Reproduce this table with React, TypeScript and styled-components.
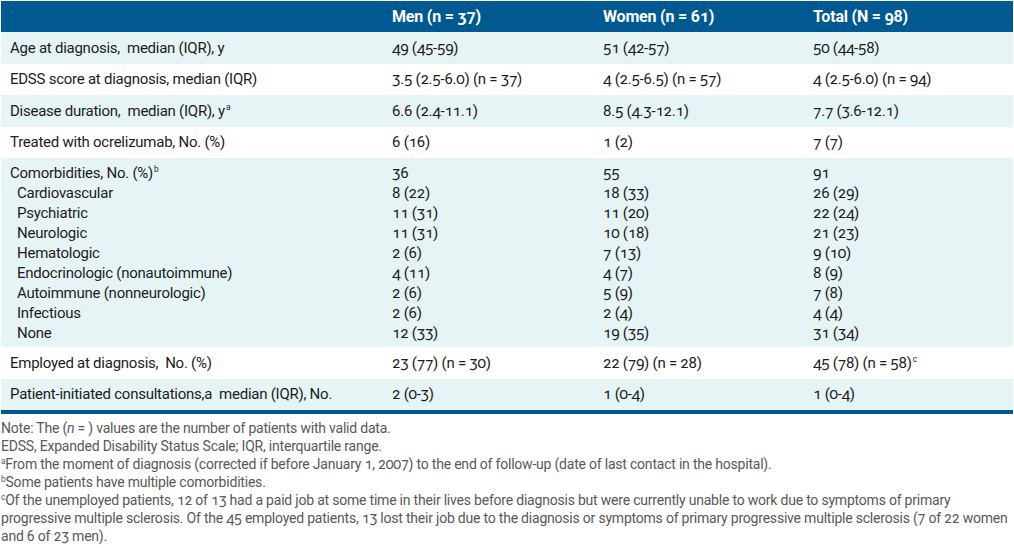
import styled, { createGlobalStyle } from 'styled-components';

type Row = {
  label: React.ReactNode;
  men: React.ReactNode;
  women: React.ReactNode;
  total: React.ReactNode;
  shaded: boolean;
};

const Sup = styled.sup`
  font-size: 0.55em;
  line-height: 0;
  vertical-align: 0.7em;
  margin-left: 1px;
`;

const rows: Row[] = [
  { label: 'Age at diagnosis,  median (IQR), y', men: '49 (45-59)', women: '51 (42-57)', total: '50 (44-58)', shaded: true },
  { label: 'EDSS score at diagnosis, median (IQR)', men: '3.5 (2.5-6.0) (n = 37)', women: '4 (2.5-6.5) (n = 57)', total: '4 (2.5-6.0) (n = 94)', shaded: false },
  { label: <>Disease duration,  median (IQR), y<Sup>a</Sup></>, men: '6.6 (2.4-11.1)', women: '8.5 (4.3-12.1)', total: '7.7 (3.6-12.1)', shaded: true },
  { label: 'Treated with ocrelizumab, No. (%)', men: '6 (16)', women: '1 (2)', total: '7 (7)', shaded: false },
];

const comorbidities = [
  ['Cardiovascular', '8 (22)', '18 (33)', '26 (29)'],
  ['Psychiatric', '11 (31)', '11 (20)', '22 (24)'],
  ['Neurologic', '11 (31)', '10 (18)', '21 (23)'],
  ['Hematologic', '2 (6)', '7 (13)', '9 (10)'],
  ['Endocrinologic (nonautoimmune)', '4 (11)', '4 (7)', '8 (9)'],
  ['Autoimmune (nonneurologic)', '2 (6)', '5 (9)', '7 (8)'],
  ['Infectious', '2 (6)', '2 (4)', '4 (4)'],
  ['None', '12 (33)', '19 (35)', '31 (34)'],
];

const tailRows: Row[] = [
  { label: 'Employed at diagnosis,  No. (%)', men: '23 (77) (n = 30)', women: '22 (79) (n = 28)', total: <>45 (78) (n = 58)<Sup>c</Sup></>, shaded: false },
  { label: 'Patient-initiated consultations,a  median (IQR), No.', men: '2 (0-3)', women: '1 (0-4)', total: '1 (0-4)', shaded: true },
];

const App = () => {
  return (
    <>
      <GlobalStyle />
      <Page>
        <Table>
          <HeaderRow>
            <Cell />
            <HeadCell>Men (n = 37)</HeadCell>
            <HeadCell>Women (n = 61)</HeadCell>
            <HeadCell>Total (N = 98)</HeadCell>
          </HeaderRow>
          {rows.map((r, i) => (
            <BodyRow key={i} $shaded={r.shaded}>
              <Cell>{r.label}</Cell>
              <Cell>{r.men}</Cell>
              <Cell>{r.women}</Cell>
              <Cell>{r.total}</Cell>
            </BodyRow>
          ))}
          <GroupRow $shaded>
            <Cell>Comorbidities, No. (%)<Sup>b</Sup></Cell>
            <Cell>36</Cell>
            <Cell>55</Cell>
            <Cell>91</Cell>
            {comorbidities.map((c) => (
              <SubLine key={c[0]}>
                <SubLabel>{c[0]}</SubLabel>
                <Cell>{c[1]}</Cell>
                <Cell>{c[2]}</Cell>
                <Cell>{c[3]}</Cell>
              </SubLine>
            ))}
          </GroupRow>
          {tailRows.map((r, i) => (
            <BodyRow key={i} $shaded={r.shaded}>
              <Cell>{r.label}</Cell>
              <Cell>{r.men}</Cell>
              <Cell>{r.women}</Cell>
              <Cell>{r.total}</Cell>
            </BodyRow>
          ))}
        </Table>
        <Notes>
          <NoteLine>Note: The (<i>n</i> = ) values are the number of patients with valid data.</NoteLine>
          <NoteLine>EDSS, Expanded Disability Status Scale; IQR, interquartile range.</NoteLine>
          <NoteLine>
            <NoteMark>a</NoteMark>From the moment of diagnosis (corrected if before January 1, 2007) to the end of follow-up (date of last contact in the hospital).
          </NoteLine>
          <NoteLine>
            <NoteMark>b</NoteMark>Some patients have multiple comorbidities.
          </NoteLine>
          <NoteLine>
            <NoteMark>c</NoteMark>Of the unemployed patients, 12 of 13 had a paid job at some time in their lives before diagnosis but were currently unable to work due to symptoms of primary
            <br />
            progressive multiple sclerosis. Of the 45 employed patients, 13 lost their job due to the diagnosis or symptoms of primary progressive multiple sclerosis (7 of 22 women
            <br />
            and 6 of 23 men).
          </NoteLine>
        </Notes>
      </Page>
    </>
  );
};

const GlobalStyle = createGlobalStyle`
  html, body {
    margin: 0;
    padding: 0;
    background: #ffffff;
  }
`;

const Page = styled.div`
  width: 1012px;
  padding: 1px 0 0 1px;
  font-family: Roboto, 'Liberation Sans', sans-serif;
  font-variant-numeric: oldstyle-nums;
  color: #1c1c1c;
`;

const Table = styled.div`
  border-bottom: 4px solid #005990;
`;

const columns = `grid-template-columns: 382px 211px 210px 1fr;`;

const HeaderRow = styled.div`
  display: grid;
  ${columns}
  align-items: center;
  height: 31px;
  background: #005990;
  color: #ffffff;
`;

const HeadCell = styled.div`
  padding-left: 9px;
  font-size: 16px;
  font-weight: 700;
  letter-spacing: -0.2px;
`;

const BodyRow = styled.div<{ $shaded: boolean }>`
  display: grid;
  ${columns}
  align-items: center;
  height: 31.5px;
  background: ${(p) => (p.$shaded ? '#e6f4f6' : '#ffffff')};
  font-size: 15px;
  letter-spacing: -0.25px;
`;

const GroupRow = styled.div<{ $shaded: boolean }>`
  display: grid;
  ${columns}
  grid-auto-rows: 20px;
  align-items: center;
  padding: 5px 0 4px;
  background: ${(p) => (p.$shaded ? '#e6f4f6' : '#ffffff')};
  font-size: 15px;
  letter-spacing: -0.25px;
`;

const SubLine = styled.div`
  display: contents;
`;

const Cell = styled.div`
  padding-left: 9px;
  white-space: pre;
`;

const SubLabel = styled(Cell)`
  padding-left: 16px;
`;

const Notes = styled.div`
  padding-top: 5px;
  font-size: 14px;
  line-height: 18px;
  letter-spacing: -0.21px;
  color: #585858;
`;

const NoteLine = styled.div`
  white-space: nowrap;
`;

const NoteMark = styled.sup`
  font-size: 0.6em;
  line-height: 0;
  vertical-align: 0.55em;
`;

export default App;
